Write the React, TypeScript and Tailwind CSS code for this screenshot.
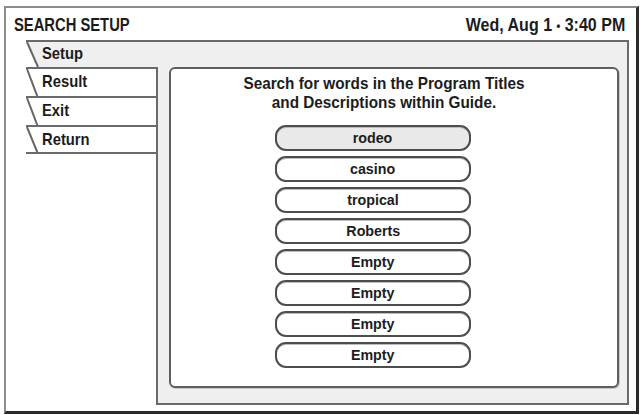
import React from "react";

const FONT = { fontFamily: '"Liberation Sans", Arial, sans-serif' };

function Slant({ h }: { h: number }) {
  return (
    <svg className="absolute left-0 top-0" width="16" height={h} viewBox={`0 0 16 ${h}`}>
      <line x1="1" y1="0" x2="12" y2={h} stroke="#666" strokeWidth="2" />
    </svg>
  );
}

function Tab({ label, last }: { label: string; last?: boolean }) {
  return (
    <div
      className={`relative h-[29px] border-t-2 border-[#6a6a6a] bg-white pl-[16px] pt-[3px] text-[17px] leading-[19px] font-bold text-[#1c1c1c] ${last ? "border-b-2" : ""}`}
    >
      <Slant h={last ? 27 : 29} />
      <span className="relative inline-block origin-left scale-x-[0.87]">{label}</span>
    </div>
  );
}

function Btn({ label, active }: { label: string; active?: boolean }) {
  return (
    <div
      className={`flex h-[26px] w-[196px] items-center justify-center rounded-[11px] border-2 border-[#4d4d4d] text-[15.5px] font-bold leading-[18px] text-[#1c1c1c] shadow-[inset_0_1px_0_#bdbdbd] ${active ? "bg-[#e9e9e9]" : "bg-white"}`}
    >
      <span className="inline-block scale-x-[0.92]">{label}</span>
    </div>
  );
}

export default function App() {
  const words = ["rodeo", "casino", "tropical", "Roberts", "Empty", "Empty", "Empty", "Empty"];
  return (
    <div className="h-[415px] w-[642px] bg-white pl-[4px] pt-[6px]" style={FONT}>
      <div className="flex h-[408px] w-[635px] flex-col border-l-2 border-t-2 border-b-[3px] border-r-[3px] border-l-[#8c8c8c] border-t-[#8c8c8c] border-b-[#2a2a2a] border-r-[#2a2a2a] bg-white">
        {/* header */}
        <div className="flex h-[32px] items-start justify-between pl-[8px] pr-[11px] pt-[8px] font-bold text-[#1c1c1c]">
          <span className="inline-block origin-left scale-x-[0.82] whitespace-nowrap text-[18px] leading-[19px]">SEARCH SETUP</span>
          <span className="inline-block origin-right scale-x-[0.89] whitespace-nowrap text-[18px] leading-[19px]">
            Wed, Aug 1 <span className="align-[1px] text-[12px]">•</span> 3:40 PM
          </span>
        </div>

        {/* body */}
        <div className="ml-[20px] mr-[7px] flex flex-col">
          {/* setup band */}
          <div className="relative h-[27px] border-r-2 border-t-2 border-[#6a6a6a] pl-[16px] pt-[2px] text-[17px] font-bold leading-[19px] text-[#1c1c1c]">
            <div className="absolute inset-0 bg-[#efefef] [clip-path:polygon(0_0,100%_0,100%_100%,11px_100%)]" />
            <Slant h={25} />
            <span className="relative inline-block origin-left scale-x-[0.87]">Setup</span>
          </div>

          <div className="flex h-[338px]">
            {/* tabs */}
            <div className="flex w-[130px] flex-col">
              <Tab label="Result" />
              <Tab label="Exit" />
              <Tab label="Return" last />
            </div>

            {/* frame */}
            <div className="flex flex-1 flex-col border-b-2 border-l-2 border-r-2 border-[#6a6a6a] bg-[#efefef] pb-[15px] pl-[11px] pr-[8px]">
              <div className="flex flex-1 flex-col rounded-[6px] border-2 border-[#5e5e5e] bg-white pt-[5px] shadow-[1px_1px_0_#c8c8c8]">
                <div className="ml-[48px] w-[330px] scale-x-[0.9] whitespace-nowrap text-center text-[17px] font-bold leading-[19px] text-[#1c1c1c]">
                  Search for words in the Program Titles
                  <br />
                  and Descriptions within Guide.
                </div>
                <div className="ml-[104px] mt-[13px] flex flex-col gap-[5px]">
                  {words.map((w, i) => (
                    <Btn key={i} label={w} active={i === 0} />
                  ))}
                </div>
              </div>
            </div>
          </div>
        </div>
      </div>
    </div>
  );
}
